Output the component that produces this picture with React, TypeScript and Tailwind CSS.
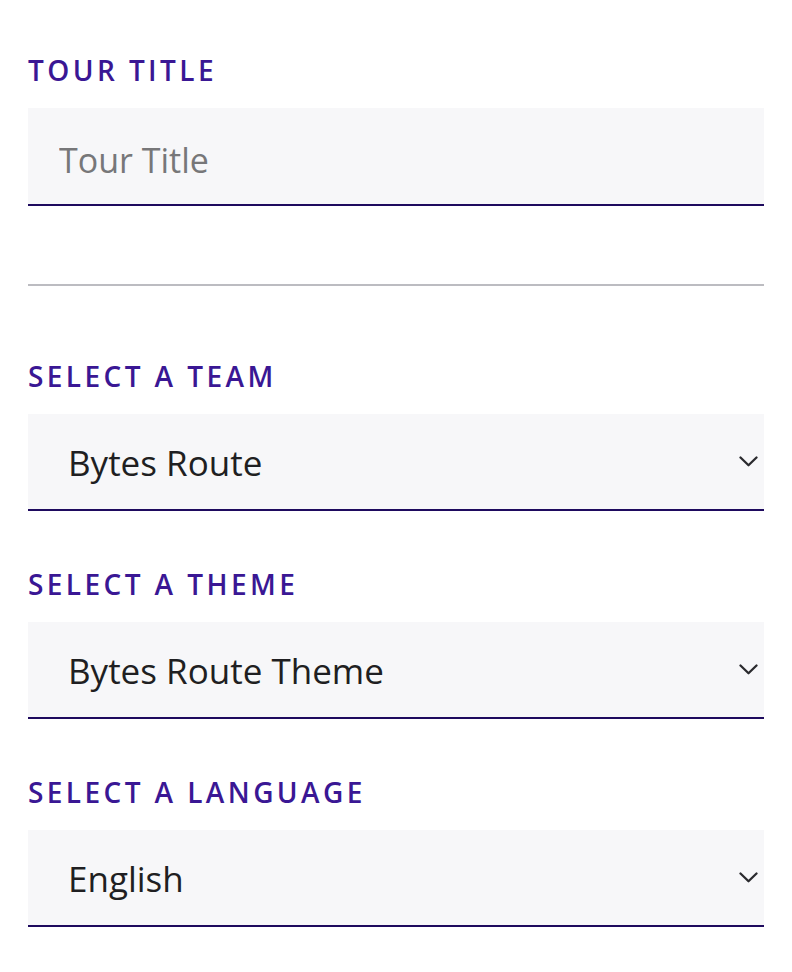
import React from "react";

const labelCls =
  "block text-[28px] leading-[28px] font-semibold uppercase tracking-[0.122em] text-[#3a1794] mb-[24px]";

function Chevron() {
  return (
    <svg width="19" height="11" viewBox="0 0 19 11" fill="none" aria-hidden className="shrink-0">
      <path d="M1.5 1.5 L9.5 9.3 L17.5 1.5" stroke="#2a2a2e" strokeWidth="2.3" strokeLinecap="round" strokeLinejoin="round" />
    </svg>
  );
}

function SelectField({ label, value, className = "" }: { label: string; value: string; className?: string }) {
  return (
    <div className={className}>
      <label className={labelCls}>{label}</label>
      <div className="flex h-[97px] items-center justify-between border-b-2 border-[#1e0a5e] bg-[#f7f7f9] pl-[40px] pr-[6px]">
        <span className="pt-[4px] text-[35px] text-[#1f1f22]">{value}</span>
        <Chevron />
      </div>
    </div>
  );
}

export default function App() {
  return (
    <div
      className="min-h-[972px] bg-white px-[28px] pt-[56px]"
      style={{ fontFamily: '"Open Sans", "Liberation Sans", sans-serif' }}
    >
      <div>
        <label className={labelCls}>Tour Title</label>
        <div className="flex h-[98px] items-center border-b-2 border-[#1e0a5e] bg-[#f7f7f9] pl-[31px]">
          <input
            placeholder="Tour Title"
            className="w-full bg-transparent pt-[8px] text-[34px] text-[#1f1f22] outline-none placeholder:text-[#777779]"
          />
        </div>
      </div>

      <div className="h-[80px] border-b-2 border-[#bcbcc1]" />

      <SelectField className="mt-[76px]" label="Select a Team" value="Bytes Route" />
      <SelectField className="mt-[59px]" label="Select a Theme" value="Bytes Route Theme" />
      <SelectField className="mt-[59px]" label="Select a Language" value="English" />
    </div>
  );
}
